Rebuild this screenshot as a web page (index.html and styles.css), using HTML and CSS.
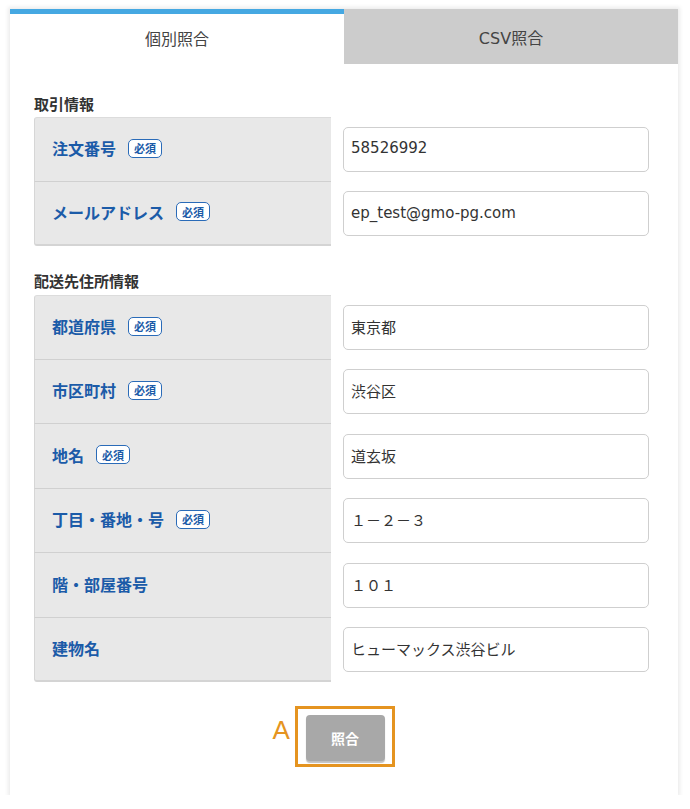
FILE: index.html
```html
<!DOCTYPE html>
<html lang="ja">
<head>
<meta charset="utf-8">
<link rel="stylesheet" href="styles.css">
</head>
<body>
<div class="card">
  <div class="tabs">
    <div class="tab active">個別照合</div>
    <div class="tab">CSV照合</div>
  </div>
  <div class="content">
    <h2 class="heading">取引情報</h2>
    <div class="table">
      <div class="row">
        <div class="label">注文番号<span class="badge">必須</span></div>
        <div class="field"><div class="input">58526992</div></div>
      </div>
      <div class="row">
        <div class="label">メールアドレス<span class="badge">必須</span></div>
        <div class="field"><div class="input">ep_test@gmo-pg.com</div></div>
      </div>
    </div>

    <h2 class="heading second">配送先住所情報</h2>
    <div class="table">
      <div class="row">
        <div class="label">都道府県<span class="badge">必須</span></div>
        <div class="field"><div class="input">東京都</div></div>
      </div>
      <div class="row">
        <div class="label">市区町村<span class="badge">必須</span></div>
        <div class="field"><div class="input">渋谷区</div></div>
      </div>
      <div class="row">
        <div class="label">地名<span class="badge">必須</span></div>
        <div class="field"><div class="input">道玄坂</div></div>
      </div>
      <div class="row">
        <div class="label">丁目・番地・号<span class="badge">必須</span></div>
        <div class="field"><div class="input">１－２－３</div></div>
      </div>
      <div class="row">
        <div class="label">階・部屋番号</div>
        <div class="field"><div class="input">１０１</div></div>
      </div>
      <div class="row">
        <div class="label">建物名</div>
        <div class="field"><div class="input">ヒューマックス渋谷ビル</div></div>
      </div>
    </div>

    <div class="actions">
      <div class="marker">
        <span class="marker-letter">A</span>
        <button class="submit">照合</button>
      </div>
    </div>
  </div>
</div>
</body>
</html>
```

FILE: styles.css
```css
* { box-sizing: border-box; }
html, body { margin: 0; padding: 0; background: #ffffff; }
body {
  font-family: "Noto Sans CJK JP", "Noto Sans", sans-serif;
  color: #333;
  padding: 9px 12px 0 10px;
}
.card {
  width: 668px;
  height: 786px;
  background: #fff;
  box-shadow: 0 0 4px 2px rgba(0,0,0,0.08);
  display: flex;
  flex-direction: column;
}
.tabs {
  display: flex;
  height: 55px;
}
.tab {
  flex: 0 0 334px;
  display: flex;
  align-items: center;
  justify-content: center;
  font-family: "DejaVu Sans", "Noto Sans CJK JP", sans-serif;
  font-size: 16px;
  color: #444;
  background: #cccccc;
}
.tab.active {
  background: #fff;
  border-top: 5px solid #45a8e2;
  padding-bottom: 3px;
}
.content {
  padding: 30px 29px 0 24px;
}
.heading {
  margin: 0 0 3px;
  font-size: 15px;
  line-height: 20px;
  font-weight: 700;
  color: #333;
}
.heading.second {
  margin-top: 25px;
  margin-bottom: 4px;
}
.table {
  display: flex;
  flex-direction: column;
}
.row {
  display: grid;
  grid-template-columns: 297px 1fr;
  height: 64.5px;
}
.label {
  background: #e8e8e8;
  border-left: 1px solid #d6d6d6;
  border-bottom: 1px solid #d0d0d0;
  display: flex;
  align-items: center;
  padding-left: 17px;
  padding-bottom: 2px;
  font-size: 16px;
  font-weight: 700;
  color: #1b5ba8;
}
.row:first-child .label {
  border-top: 1px solid #dcdcdc;
  border-top-left-radius: 3px;
}
.row:last-child .label {
  border-bottom: 2px solid #d4d4d4;
  border-bottom-left-radius: 3px;
}
.badge {
  display: inline-flex;
  align-items: center;
  justify-content: center;
  margin-left: 12px;
  width: 34px;
  height: 19px;
  border: 1.5px solid #2a6bb8;
  border-radius: 5px;
  font-size: 11px;
  font-weight: 700;
  color: #1b5ba8;
  background: #fff;
}
.field {
  display: flex;
  align-items: center;
  padding-left: 12px;
}
.input {
  width: 306px;
  height: 45px;
  border: 1px solid #cfcfcf;
  border-radius: 5px;
  background: #fff;
  display: flex;
  align-items: center;
  padding-left: 7px;
  padding-bottom: 2px;
  font-family: "DejaVu Sans", "Noto Sans CJK JP", sans-serif;
  font-size: 15px;
  color: #333;
}
.actions {
  display: flex;
  justify-content: center;
  margin-top: 24px;
  padding-left: 6px;
}
.marker {
  position: relative;
  border: 3px solid #e59420;
  padding: 6px 7px 3px 8px;
}
.marker-letter {
  position: absolute;
  left: -25px;
  top: 6px;
  font-family: "Liberation Sans", sans-serif;
  font-size: 26px;
  color: #e59420;
  line-height: 30px;
}
.submit {
  display: block;
  width: 79px;
  height: 46px;
  border: none;
  border-radius: 4px;
  background: #a8a8a8;
  box-shadow: 0 2px 1px rgba(0,0,0,0.25);
  color: #fff;
  font-family: "Noto Sans CJK JP", sans-serif;
  font-size: 14px;
  font-weight: 700;
  padding: 0;
}
```
